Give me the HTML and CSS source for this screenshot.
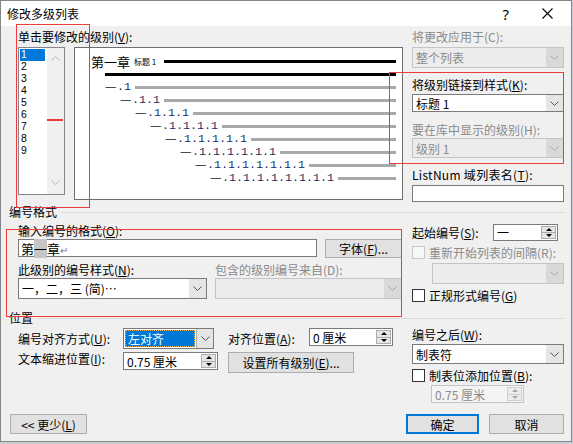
FILE: index.html
```html
<!DOCTYPE html>
<html lang="zh-CN">
<head>
<meta charset="utf-8">
<title>修改多级列表</title>
<link rel="stylesheet" href="styles.css">
</head>
<body>
<div class="dialog">
  <div class="titlebar">
    <span class="title">修改多级列表</span>
    <span class="help">?</span>
    <span class="close"><svg width="11" height="11" viewBox="0 0 11 11"><path d="M0.5 0.5 L10.5 10.5 M10.5 0.5 L0.5 10.5" stroke="#000" stroke-width="1.1" fill="none"/></svg></span>
  </div>
  <div class="content">
    <div class="top">
      <div class="col">
        <div class="lbl">单击要修改的级别(<u>V</u>):</div>
        <div class="levels">
          <div class="levellist">
            <div class="items">
              <div class="item sel">1</div>
              <div class="item">2</div>
              <div class="item">3</div>
              <div class="item">4</div>
              <div class="item">5</div>
              <div class="item">6</div>
              <div class="item">7</div>
              <div class="item">8</div>
              <div class="item">9</div>
            </div>
            <div class="scroll">
              <svg class="chev" width="9" height="5" viewBox="0 0 9 5"><path d="M0.5 4.5 L4.5 0.5 L8.5 4.5" fill="none" stroke="currentColor"/></svg>
              <svg class="chev" width="9" height="5" viewBox="0 0 9 5"><path d="M0.5 0.5 L4.5 4.5 L8.5 0.5" fill="none" stroke="currentColor"/></svg>
            </div>
          </div>
          <div class="preview">
            <div class="prow r1"><span class="h1">第一章</span><span class="sty">标题 1</span><span class="bar blk"></span></div>
            <div class="prow i2"><span class="bar blk"></span></div>
            <div class="prow i2"><span class="num"><span class="d">一</span>.1</span><span class="bar"></span></div>
            <div class="prow i3"><span class="num"><span class="d">一</span>.1.1</span><span class="bar"></span></div>
            <div class="prow i4"><span class="num"><span class="d">一</span>.1.1.1</span><span class="bar"></span></div>
            <div class="prow i5"><span class="num"><span class="d">一</span>.1.1.1.1</span><span class="bar"></span></div>
            <div class="prow i6"><span class="num"><span class="d">一</span>.1.1.1.1.1</span><span class="bar"></span></div>
            <div class="prow i7"><span class="num"><span class="d">一</span>.1.1.1.1.1.1</span><span class="bar"></span></div>
            <div class="prow i8"><span class="num"><span class="d">一</span>.1.1.1.1.1.1.1</span><span class="bar"></span></div>
            <div class="prow i9"><span class="num"><span class="d">一</span>.1.1.1.1.1.1.1.1</span><span class="bar"></span></div>
          </div>
        </div>
      </div>
      <div class="col">
        <div class="lbl dis">将更改应用于(C):</div>
        <div class="combo dis h21 mt3"><span class="val">整个列表</span><span class="drop"><svg class="chev" width="9" height="5" viewBox="0 0 9 5"><path d="M0.5 0.5 L4.5 4.5 L8.5 0.5" fill="none" stroke="currentColor"/></svg></span></div>
        <div class="lbl mt10">将级别链接到样式(<u>K</u>):</div>
        <div class="combo h18 mt2"><span class="val">标题 1</span><span class="drop"><svg class="chev" width="9" height="5" viewBox="0 0 9 5"><path d="M0.5 0.5 L4.5 4.5 L8.5 0.5" fill="none" stroke="currentColor"/></svg></span></div>
        <div class="lbl dis mt11">要在库中显示的级别(H):</div>
        <div class="combo dis h20 mt1"><span class="val">级别 1</span><span class="drop"><svg class="chev" width="9" height="5" viewBox="0 0 9 5"><path d="M0.5 0.5 L4.5 4.5 L8.5 0.5" fill="none" stroke="currentColor"/></svg></span></div>
        <div class="lbl mt10 mono">ListNum 域列表名(<u>T</u>):</div>
        <div class="input h17 mt3"></div>
      </div>
    </div>

    <div class="grp"><span>编号格式</span><span class="rule"></span></div>
    <div class="fmt">
      <div class="col">
        <div class="lbl">输入编号的格式(<u>O</u>):</div>
        <div class="frow mt1">
          <div class="input fmtin"><span class="val">第<span class="shade">一</span>章<span class="ret">↵</span></span></div>
          <div class="btn fontbtn">字体(<u>F</u>)...</div>
        </div>
        <div class="lblrow mt5">
          <span class="lbl w197">此级别的编号样式(<u>N</u>):</span>
          <span class="lbl dis">包含的级别编号来自(D):</span>
        </div>
        <div class="frow mt1">
          <div class="combo h21 w189"><span class="val">一，二，三 (简)…</span><span class="drop"><svg class="chev" width="9" height="5" viewBox="0 0 9 5"><path d="M0.5 0.5 L4.5 4.5 L8.5 0.5" fill="none" stroke="currentColor"/></svg></span></div>
          <div class="combo dis h21 w187"><span class="val"></span><span class="drop"><svg class="chev" width="9" height="5" viewBox="0 0 9 5"><path d="M0.5 0.5 L4.5 4.5 L8.5 0.5" fill="none" stroke="currentColor"/></svg></span></div>
        </div>
      </div>
      <div class="col">
        <div class="spinrow">
          <span class="lbl">起始编号(<u>S</u>):</span>
          <div class="spin w65 h17 start"><span class="val">一</span><span class="arr"><span><i class="up"></i></span><span><i class="dn"></i></span></span></div>
        </div>
        <div class="chkrow dis mt5"><span class="cb"></span><span>重新开始列表的间隔(R):</span></div>
        <div class="combo dis h21 mt4 restart"><span class="val"></span><span class="drop"><svg class="chev" width="9" height="5" viewBox="0 0 9 5"><path d="M0.5 0.5 L4.5 4.5 L8.5 0.5" fill="none" stroke="currentColor"/></svg></span></div>
        <div class="chkrow mt5"><span class="cb"></span><span>正规形式编号(<u>G</u>)</span></div>
      </div>
    </div>

    <div class="grp"><span>位置</span><span class="rule"></span></div>
    <div class="pos">
      <div class="col">
        <div class="prow1">
          <span class="lbl w105">编号对齐方式(<u>U</u>):</span>
          <div class="combo focus h21 w91"><span class="val"><span class="hl">左对齐</span></span><span class="drop"><svg class="chev" width="9" height="5" viewBox="0 0 9 5"><path d="M0.5 0.5 L4.5 4.5 L8.5 0.5" fill="none" stroke="currentColor"/></svg></span></div>
          <span class="lbl w81 ml14">对齐位置(<u>A</u>):</span>
          <div class="spin w84 h18 selfstart"><span class="val">0 厘米</span><span class="arr"><span><i class="up"></i></span><span><i class="dn"></i></span></span></div>
        </div>
        <div class="prow2">
          <span class="lbl w105">文本缩进位置(<u>I</u>):</span>
          <div class="spin w95 h18"><span class="val">0.75 厘米</span><span class="arr"><span><i class="up"></i></span><span><i class="dn"></i></span></span></div>
          <div class="btn setall">设置所有级别(<u>E</u>)...</div>
        </div>
      </div>
      <div class="col">
        <div class="lbl mt3">编号之后(<u>W</u>):</div>
        <div class="combo h20 mt2"><span class="val">制表符</span><span class="drop"><svg class="chev" width="9" height="5" viewBox="0 0 9 5"><path d="M0.5 0.5 L4.5 4.5 L8.5 0.5" fill="none" stroke="currentColor"/></svg></span></div>
        <div class="chkrow mt5"><span class="cb"></span><span>制表位添加位置(<u>B</u>):</span></div>
        <div class="spin dis w93 h18 mt3 tabpos"><span class="val">0.75 厘米</span><span class="arr"><span><i class="up"></i></span><span><i class="dn"></i></span></span></div>
      </div>
    </div>

    <div class="bottom">
      <div class="btn less">&lt;&lt; 更少(<u>L</u>)</div>
      <div class="btn ok">确定</div>
      <div class="btn cancel">取消</div>
    </div>
  </div>
</div>
<div class="mark m1"></div>
<div class="mark m2"></div>
<div class="mark m3"></div>
<div class="mark-line"></div>
</body>
</html>
```

FILE: styles.css
```css
* { box-sizing: border-box; }
body {
  margin: 0;
  width: 573px;
  height: 444px;
  overflow: hidden;
  position: relative;
  background: #c9ccd2;
  font-family: "Noto Sans CJK SC", "Noto Sans", sans-serif;
  font-size: 12px;
  color: #000;
}
u { text-decoration: underline; text-underline-offset: 1px; }
.dialog {
  width: 572px;
  height: 442px;
  border: 1px solid #858585;
  background: #f0f0f0;
}
.titlebar {
  height: 25px;
  background: #fff;
  display: flex;
  align-items: center;
  padding-left: 6px;
}
.title { flex: 1; line-height: 14px; }
.help { font-family: "Noto Sans", sans-serif; font-size: 15px; margin-right: 33px; }
.close { display: flex; margin-right: 18px; }

.content { padding: 0 7px 0 8px; }
.top, .fmt, .pos {
  display: grid;
  grid-template-columns: 385px 152px;
  column-gap: 9px;
  margin-left: 9px;
}
.top { height: 179px; padding-top: 4px; }
.fmt { height: 92px; padding-top: 5px; }
.pos { height: 89px; }
.col { display: flex; flex-direction: column; align-items: flex-start; }
.col > .combo, .col > .input { align-self: stretch; }

.lbl { display: block; height: 14px; line-height: 14px; white-space: nowrap; }
.mono { letter-spacing: 0.3px; }
.dis { color: #8a8a8a; }
.mt1 { margin-top: 1px; } .mt2 { margin-top: 2px; } .mt3 { margin-top: 3px; }
.mt4 { margin-top: 4px; } .mt5 { margin-top: 5px; } .mt10 { margin-top: 10px; } .mt11 { margin-top: 11px; }
.h17 { height: 17px; } .h18 { height: 18px; } .h20 { height: 20px; } .h21 { height: 21px; }

/* level list */
.levels { display: flex; gap: 9px; margin-top: 3px; align-items: flex-start; }
.levellist {
  width: 47px; height: 148px;
  border: 1px solid #828790;
  display: flex;
  background: #fff;
}
.items { width: 28px; padding: 1px 2px 0 1px; }
.item {
  height: 12px; line-height: 12px; padding-left: 1px;
  font-family: "Liberation Sans", sans-serif; font-size: 10.4px;
}
.item.sel { background: #0078d7; color: #fff; }
.scroll {
  flex: 1;
  background: #f0f0f0;
  display: flex;
  flex-direction: column;
  justify-content: space-between;
  align-items: center;
  padding: 8px 0 9px;
  color: #b4b4b4;
}
.chev { display: block; }

/* preview */
.preview {
  width: 329px; height: 153px;
  border: 1px solid #6e6e6e;
  background: #fff;
  padding: 7px 6px 0 0;
}
.prow { height: 13px; display: flex; align-items: center; gap: 4px; white-space: nowrap; }
.bar { flex: 1; height: 3px; background: #a9a9a9; }
.bar.blk { background: #000; }
.r1 { padding-left: 16px; }
.h1 { font-size: 13px; line-height: 13px; }
.sty { font-size: 8px; line-height: 13px; margin-right: 4px; }
.num { font-family: "Liberation Mono", monospace; font-size: 11.67px; line-height: 13px; color: #1d2a62; display: flex; align-items: center; }
.num .d {
  display: inline-block;
  width: 12px;
  font-family: "Noto Sans CJK SC", sans-serif;
  font-size: 8.8px;
  line-height: 13px;
  color: #222;
  transform: scaleX(1.3);
  transform-origin: left center;
}
.i2 { padding-left: 30px; } .i3 { padding-left: 45px; } .i4 { padding-left: 60px; }
.i5 { padding-left: 75px; } .i6 { padding-left: 90px; } .i7 { padding-left: 105px; }
.i8 { padding-left: 120px; } .i9 { padding-left: 135px; }

/* controls */
.combo {
  display: flex;
  border: 1px solid #7a7a7a;
  background: #fff;
  color: #000;
}
.combo .val { flex: 1; display: flex; align-items: center; padding-left: 3px; white-space: nowrap; overflow: hidden; }
.combo .drop {
  width: 17px;
  display: flex; align-items: center; justify-content: center;
  background: #e5e5e5;
  color: #555;
}
.combo.dis { border-color: #c4c4c4; background: #ececec; color: #8a8a8a; }
.combo.dis .drop { background: #d9d9d9; color: #a6a6a6; }
.combo.focus .val { padding: 1px; }
.combo.focus .hl {
  flex: 1; align-self: stretch;
  background: #0078d7; color: #fff;
  padding-left: 3px;
  display: flex; align-items: center;
  outline: 1px dotted #f2b24a; outline-offset: -1px;
}
.combo.focus .drop { border-left: 1px solid #adadad; }
.input { border: 1px solid #7a7a7a; background: #fff; display: flex; align-items: center; }
.input .val { padding-left: 2px; font-size: 13px; white-space: nowrap; }
.shade { background: #c6c6c6; }
.ret { font-size: 10px; color: #777; }
.btn {
  background: #e1e1e1;
  border: 1px solid #adadad;
  display: flex; align-items: center; justify-content: center;
  white-space: nowrap;
}
.frow { display: flex; gap: 8px; align-items: flex-start; }
.lblrow { display: flex; }
.w197 { width: 197px; }
.fmtin { width: 299px; height: 18px; }
.fontbtn { width: 77px; height: 19px; }
.w189 { width: 189px; } .w187 { width: 187px; }

.spin { display: flex; border: 1px solid #7a7a7a; background: #fff; }
.spin .val { flex: 1; display: flex; align-items: center; padding-left: 3px; white-space: nowrap; }
.spin .arr { width: 16px; display: flex; flex-direction: column; padding: 1px 1px 1px 0; }
.spin .arr > span {
  flex: 1;
  background: #e5e5e5;
  border: 1px solid #adadad;
  display: flex; align-items: center; justify-content: center;
}
.spin .arr > span + span { border-top: none; }
.up { width: 0; height: 0; border-left: 3px solid transparent; border-right: 3px solid transparent; border-bottom: 3px solid #000; }
.dn { width: 0; height: 0; border-left: 3px solid transparent; border-right: 3px solid transparent; border-top: 3px solid #000; }
.spin.dis { border-color: #c4c4c4; color: #8a8a8a; background: #f4f4f4; }
.spin.dis .arr > span { border-color: #cfcfcf; background: #ececec; }
.spin.dis .up { border-bottom-color: #a6a6a6; }
.spin.dis .dn { border-top-color: #a6a6a6; }
.w65 { width: 65px; } .w84 { width: 84px; } .w93 { width: 93px; } .w95 { width: 95px; } .w91 { width: 91px; }

.spinrow { display: flex; align-items: center; height: 17px; align-self: stretch; }
.spinrow .start { margin-left: auto; margin-right: 6px; }
.chkrow { display: flex; align-items: center; height: 13px; line-height: 14px; white-space: nowrap; }
.cb { width: 13px; height: 13px; border: 1px solid #333; background: #fff; margin-right: 4px; }
.chkrow.dis .cb { border-color: #c8c8c8; background: #f7f7f7; }
.restart { margin-left: 20px; }
.tabpos { margin-left: 19px; }

.grp { display: flex; align-items: center; height: 14px; line-height: 14px; white-space: nowrap; }
.grp .rule { flex: 1; height: 1px; background: #d9d9d9; margin-left: 4px; }

.prow1 { display: flex; align-items: center; margin-top: 3px; height: 21px; }
.prow2 { display: flex; align-items: flex-start; margin-top: 3px; }
.w105 { width: 105px; } .w81 { width: 81px; } .ml14 { margin-left: 14px; }
.selfstart { align-self: flex-start; }
.setall { width: 126px; height: 21px; margin-left: 10px; }

.bottom { display: flex; height: 20px; }
.less { width: 77px; margin-left: 1px; }
.ok { width: 73px; margin-left: auto; border: 2px solid #0078d7; }
.cancel { width: 75px; margin-left: 10px; }

/* red annotation overlays */
.mark { position: absolute; border: 1px solid #ee3b3b; }
.m1 { left: 16px; top: 24px; width: 74px; height: 184px; }
.m2 { left: 389px; top: 72px; width: 175px; height: 92px; }
.m3 { left: 6px; top: 229px; width: 396px; height: 88px; }
.mark-line { position: absolute; left: 47px; top: 119px; width: 16px; height: 2px; background: #ee3b3b; }
```
